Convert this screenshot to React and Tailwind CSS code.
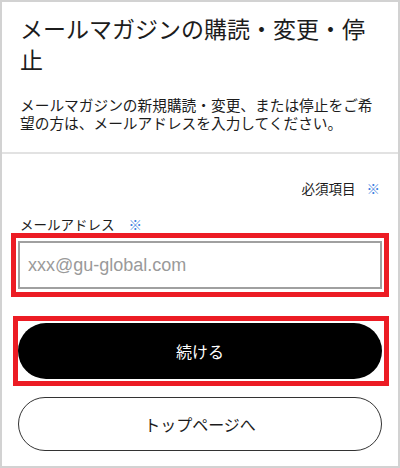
import React from 'react';

const jp = "font-['Noto_Sans_CJK_JP',sans-serif]";

const App = () => {
  return (
    <div className={`w-[400px] h-[468px] bg-white border-2 border-[#d2d2d2] flex flex-col text-[#1c1c1c] ${jp}`}>
      {/* 見出し */}
      <section className="pt-[11px] pb-[21px] px-[18px] border-b-2 border-[#e2e2e2]">
        <h1 className="text-[23px] leading-[31px] font-normal">
          メールマガジンの購読・変更・停止
        </h1>
        <p className="mt-[21px] text-[14.7px] leading-[17.5px]">
          メールマガジンの新規購読・変更、または停止をご希望の方は、メールアドレスを入力してください。
        </p>
      </section>

      {/* フォーム */}
      <section className="flex-1 px-[16px] pt-[24px]">
        <div className="flex justify-end items-center text-[13.5px] leading-[20px] pr-[2px]">
          <span>必須項目</span>
          <span className="ml-[11px] text-[#3d7fe0]">※</span>
        </div>

        <label className="mt-[17px] flex items-center text-[13.5px] leading-[18px] pl-[2px]">
          <span>メールアドレス</span>
          <span className="ml-[14px] text-[#3d7fe0]">※</span>
        </label>

        <div className="-mx-[7px] border-[5px] border-[#ec1c24] px-[2px] py-[3px]">
          <input
            type="email"
            placeholder="xxx@gu-global.com"
            className="block w-full h-[48px] border-2 border-[#a0a0a0] px-[8px] text-[18px] font-['Liberation_Sans',sans-serif] placeholder:text-[#9a9a9a] outline-none"
          />
        </div>

        <div className="mt-[19px] -ml-[5px] -mr-[7px] border-[5px] border-[#ec1c24] pl-[0px] pr-[2px] py-[2px]">
          <button className="block w-full h-[56px] rounded-full bg-black text-white text-[16px]">
            続ける
          </button>
        </div>

        <button className="mt-[11px] block w-full h-[54px] rounded-full border-[1.5px] border-[#333] bg-white text-[16px] text-[#1c1c1c]">
          トップページへ
        </button>
      </section>
    </div>
  );
};

export default App;
